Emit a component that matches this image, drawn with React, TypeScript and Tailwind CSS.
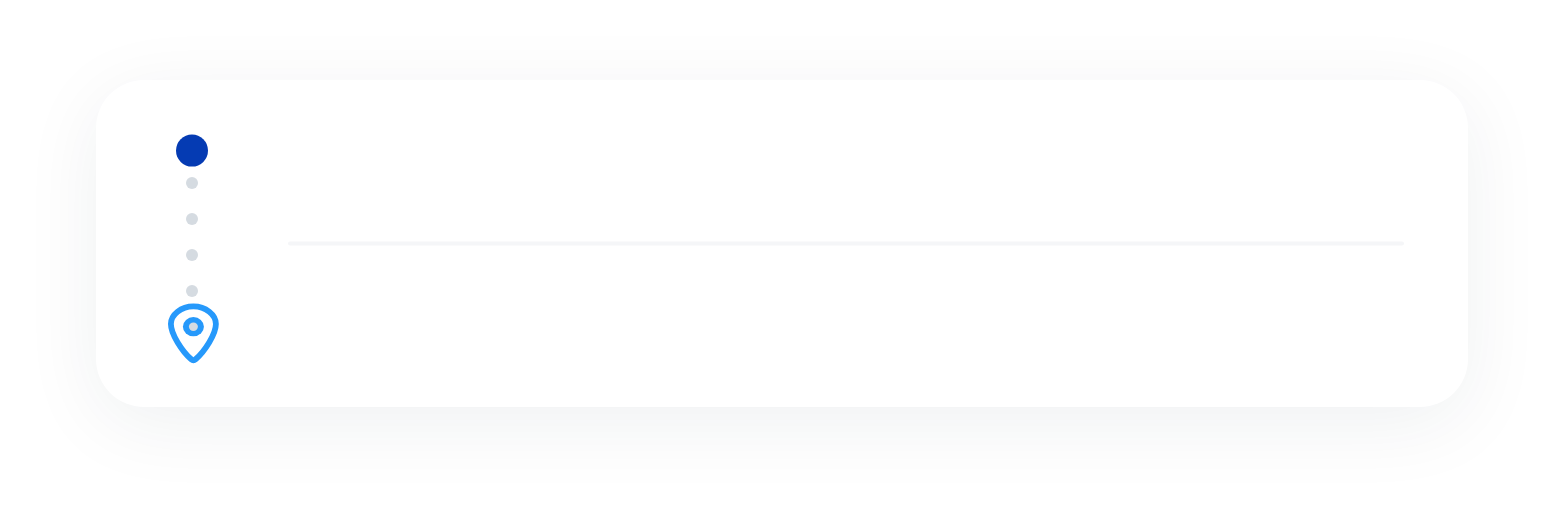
function MapPin() {
  return (
    <svg className="block h-[62px] w-[54px] shrink-0" viewBox="167 302 54 62" fill="none" aria-hidden="true">
      <path
        d="M193.4 306.4C181.1 306.4 170.9 314.8 170.9 324C170.9 334.2 182.1 351.3 191.2 359.3C192.7 360.6 194.1 360.6 195.6 359.3C204.7 351.3 215.9 334.2 215.9 324C215.9 314.8 205.7 306.4 193.4 306.4Z"
        stroke="#2699fb"
        strokeWidth="5.8"
        strokeLinejoin="round"
      />
      <ellipse cx="193.4" cy="326.7" rx="10.5" ry="9.6" fill="#2699fb" />
      <ellipse cx="193.4" cy="326.7" rx="4.5" ry="4.2" fill="#d5dbe1" />
    </svg>
  );
}

function RouteMarkers() {
  return (
    <div className="flex w-[54px] flex-col">
      <svg className="ml-[9px] block h-[33px] w-8" viewBox="0 0 32 33" aria-hidden="true">
        <circle cx="16" cy="16.6" r="16" fill="#053bb3" />
      </svg>
      <div className="mt-[10px] ml-[19px] flex flex-col gap-6">
        {[0, 1, 2, 3].map((dot) => (
          <span key={dot} className="size-3 rounded-full bg-[#d5dbe1]" />
        ))}
      </div>
      <div className="mt-[5px]">
        <MapPin />
      </div>
    </div>
  );
}

export default function App() {
  return (
    <main className="h-[520px] w-[1564px] overflow-hidden bg-white px-24 pt-20">
      <section className="flex h-[327px] rounded-[48px] bg-white pt-[54px] pr-16 pl-[71px] shadow-[0_16px_80px_rgba(15,45,55,0.065)]">
        <RouteMarkers />
        <div className="ml-[67px] flex-1 pt-[107px]">
          <svg className="block h-[5px] w-full" aria-hidden="true">
            <rect y="0.6" width="100%" height="4" rx="2" fill="#f5f6f8" />
          </svg>
        </div>
      </section>
    </main>
  );
}
